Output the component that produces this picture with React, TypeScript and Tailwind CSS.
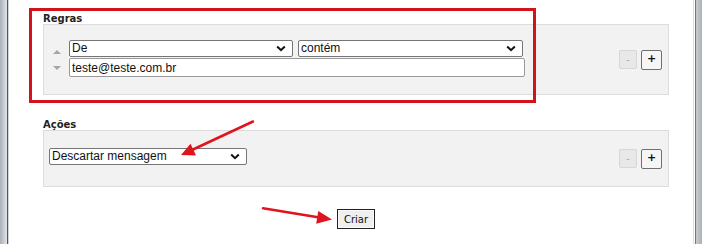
import React from "react";

function Chevron() {
  return (
    <svg width="10" height="7" viewBox="0 0 10 7" className="shrink-0">
      <path d="M1.2 1.5 L5 5.2 L8.8 1.5" fill="none" stroke="#111" strokeWidth="2" />
    </svg>
  );
}

function FakeSelect({ text, w }: { text: string; w: string }) {
  return (
    <div
      className={`${w} h-[17px] border border-[#767676] rounded-[2px] bg-white flex items-center justify-between pl-[2px] pr-[6px] text-[12px] leading-[15px] text-[#111] font-['Liberation_Sans',Arial,sans-serif]`}
    >
      <span>{text}</span>
      <Chevron />
    </div>
  );
}

function SmallButtons() {
  return (
    <div className="flex items-center gap-[4px] self-center">
      <div className="w-[18px] h-[19px] bg-[#e8e8e8] border border-[#d6d6d6] rounded-[2px] flex items-center justify-center text-[10px] text-[#aaa] font-['DejaVu_Sans',sans-serif]">
        -
      </div>
      <div className="w-[21px] h-[20px] bg-[#f6f6f6] border border-[#6f6f6f] rounded-[2px] flex items-center justify-center text-[11px] font-bold text-[#111] font-['DejaVu_Sans',sans-serif]">
        +
      </div>
    </div>
  );
}

function Label({ children }: { children: React.ReactNode }) {
  return (
    <div className="h-[11px] leading-[11px] text-[10px] font-bold text-[#222] font-['DejaVu_Sans',Verdana,sans-serif]">
      {children}
    </div>
  );
}

export default function App() {
  return (
    <div className="relative w-[702px] h-[244px] overflow-hidden bg-white flex">
      {/* left window edge */}
      <div className="w-[7px] h-full bg-gradient-to-r from-[#a9b1b8] to-[#e2e5e8]" />
      <div className="w-[1px] h-full bg-[#565656]" />
      <div className="w-[1px] h-full bg-[#d4d4d4]" />

      {/* main content */}
      <div className="w-[684px] h-full flex flex-col pl-[34px] pr-[24px]">
        <div className="mt-[13px]">
          <Label>Regras</Label>
        </div>
        <div className="h-[71px] bg-[#f2f2f2] border border-[#dcdcdc] flex items-start justify-between pl-[9px] pr-[6px]">
          <div className="flex items-start pt-[15px]">
            <div className="w-[8px] flex flex-col items-center mr-[8px]">
              <svg width="8" height="4" viewBox="0 0 8 4" className="mt-[10px]">
                <polygon points="0,4 8,4 4,0" fill="#a6a6a6" />
              </svg>
              <svg width="8" height="4" viewBox="0 0 8 4" className="mt-[12px]">
                <polygon points="0,0 8,0 4,4" fill="#a6a6a6" />
              </svg>
            </div>
            <div className="flex flex-col gap-[1px]">
              <div className="flex gap-[5px]">
                <FakeSelect text="De" w="w-[224px]" />
                <FakeSelect text="contém" w="w-[225px]" />
              </div>
              <div className="w-[456px] h-[19px] border border-[#9a9a9a] rounded-[2px] bg-white flex items-center pl-[2px] text-[12px] text-[#111] font-['Liberation_Sans',Arial,sans-serif]">
                teste@teste.com.br
              </div>
            </div>
          </div>
          <SmallButtons />
        </div>

        <div className="mt-[24px]">
          <Label>Ações</Label>
        </div>
        <div className="h-[57px] bg-[#f2f2f2] border border-[#dcdcdc] flex items-start justify-between pl-[5px] pr-[6px]">
          <div className="pt-[17px]">
            <FakeSelect text="Descartar mensagem" w="w-[198px]" />
          </div>
          <SmallButtons />
        </div>

        <div className="mt-[22px] ml-[294px]">
          <div className="w-[38px] h-[20px] bg-[#efefef] border border-[#222] shadow-[inset_0_0_0_1px_#fafafa] flex items-center justify-center text-[10px] text-[#111] font-['DejaVu_Sans',Verdana,sans-serif]">
            Criar
          </div>
        </div>
      </div>

      {/* right window edge */}
      <div className="w-[1px] h-full bg-[#dedede]" />
      <div className="w-[1px] h-full bg-white" />
      <div className="w-[1px] h-full bg-[#767676]" />
      <div className="w-[6px] h-full bg-gradient-to-r from-[#c7ccd1] to-[#aab1b7]" />

      {/* annotations */}
      <div className="absolute left-[29px] top-[8px] w-[507px] h-[95px] border-[3px] border-[#d3121b] pointer-events-none" />
      <svg className="absolute left-0 top-0 pointer-events-none" width="702" height="244" viewBox="0 0 702 244">
        <line x1="253" y1="121.5" x2="193" y2="149.5" stroke="#e0141c" strokeWidth="2.5" strokeLinecap="round" />
        <polygon points="181,155 196,155.5 190.5,143.8" fill="#e0141c" />
        <line x1="263" y1="208.3" x2="318" y2="217.2" stroke="#e0141c" strokeWidth="2.5" strokeLinecap="round" />
        <polygon points="332,219.6 316.2,223.8 318.3,211" fill="#e0141c" />
      </svg>
    </div>
  );
}
